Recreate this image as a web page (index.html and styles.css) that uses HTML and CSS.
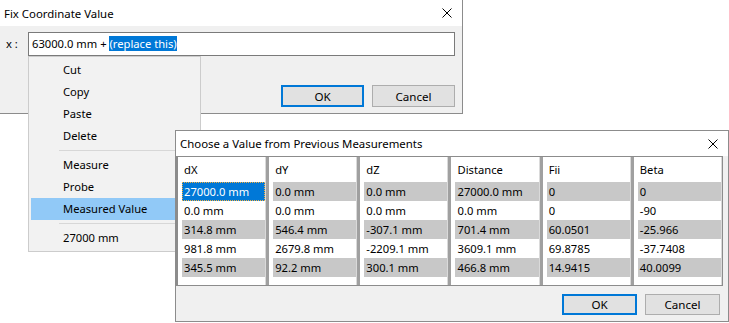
FILE: index.html
```html
<!DOCTYPE html>
<html lang="en">
<head>
    <meta charset="UTF-8">
    <title>Fix Coordinate Value</title>
    <link rel="stylesheet" href="styles.css">
</head>
<body>
    <div class="desktop">
        <div class="window fix-dialog">
            <div class="titlebar">
                <span class="title">Fix Coordinate Value</span>
                <svg class="close" width="10" height="10" viewBox="0 0 10 10"><path d="M0.5 0.5 L9.5 9.5 M9.5 0.5 L0.5 9.5" stroke="#000" stroke-width="1"/></svg>
            </div>
            <div class="dialog-body">
                <div class="field-row">
                    <span class="field-label">x :</span>
                    <div class="textbox">63000.0 mm + <span class="selected-text">(replace this)</span></div>
                </div>
                <div class="buttons">
                    <button class="btn default">OK</button>
                    <button class="btn">Cancel</button>
                </div>
            </div>
        </div>

        <div class="context-menu">
            <div class="menu-item">Cut</div>
            <div class="menu-item">Copy</div>
            <div class="menu-item">Paste</div>
            <div class="menu-item">Delete</div>
            <div class="menu-separator"></div>
            <div class="menu-item">Measure</div>
            <div class="menu-item">Probe</div>
            <div class="menu-item hover">Measured Value</div>
            <div class="menu-separator"></div>
            <div class="menu-item">27000 mm</div>
        </div>

        <div class="window choose-dialog">
            <div class="titlebar">
                <span class="title">Choose a Value from Previous Measurements</span>
                <svg class="close" width="10" height="10" viewBox="0 0 10 10"><path d="M0.5 0.5 L9.5 9.5 M9.5 0.5 L0.5 9.5" stroke="#000" stroke-width="1"/></svg>
            </div>
            <div class="values-table">
                <div class="column">
                    <div class="column-head">dX</div>
                    <div class="cell shaded current">27000.0 mm</div>
                    <div class="cell">0.0 mm</div>
                    <div class="cell shaded">314.8 mm</div>
                    <div class="cell">981.8 mm</div>
                    <div class="cell shaded">345.5 mm</div>
                </div>
                <div class="column">
                    <div class="column-head">dY</div>
                    <div class="cell shaded">0.0 mm</div>
                    <div class="cell">0.0 mm</div>
                    <div class="cell shaded">546.4 mm</div>
                    <div class="cell">2679.8 mm</div>
                    <div class="cell shaded">92.2 mm</div>
                </div>
                <div class="column">
                    <div class="column-head">dZ</div>
                    <div class="cell shaded">0.0 mm</div>
                    <div class="cell">0.0 mm</div>
                    <div class="cell shaded">-307.1 mm</div>
                    <div class="cell">-2209.1 mm</div>
                    <div class="cell shaded">300.1 mm</div>
                </div>
                <div class="column">
                    <div class="column-head">Distance</div>
                    <div class="cell shaded">27000.0 mm</div>
                    <div class="cell">0.0 mm</div>
                    <div class="cell shaded">701.4 mm</div>
                    <div class="cell">3609.1 mm</div>
                    <div class="cell shaded">466.8 mm</div>
                </div>
                <div class="column">
                    <div class="column-head">Fii</div>
                    <div class="cell shaded">0</div>
                    <div class="cell">0</div>
                    <div class="cell shaded">60.0501</div>
                    <div class="cell">69.8785</div>
                    <div class="cell shaded">14.9415</div>
                </div>
                <div class="column">
                    <div class="column-head">Beta</div>
                    <div class="cell shaded">0</div>
                    <div class="cell">-90</div>
                    <div class="cell shaded">-25.966</div>
                    <div class="cell">-37.7408</div>
                    <div class="cell shaded">40.0099</div>
                </div>
            </div>
            <div class="buttons">
                <button class="btn default">OK</button>
                <button class="btn">Cancel</button>
            </div>
        </div>
    </div>
</body>
</html>
```

FILE: styles.css
```css
* {
    box-sizing: border-box;
}
body {
    margin: 0;
    background-color: #fff;
    font-family: "Noto Sans", "Segoe UI", sans-serif;
    font-size: 11.2px;
    color: #000;
}
.desktop {
    position: relative;
    width: 729px;
    height: 323px;
    overflow: hidden;
}
.window {
    position: absolute;
    display: flex;
    flex-direction: column;
    background-color: #f0f0f0;
    border: 1px solid #8c8c8c;
}
.titlebar {
    display: flex;
    align-items: center;
    justify-content: space-between;
    background-color: #fff;
}
.title {
    font-size: 11.4px;
}
.close {
    display: block;
}
.btn {
    font: inherit;
    font-size: 11.6px;
    color: #000;
    background-color: #e1e1e1;
    border: 1px solid #adadad;
    padding: 0;
}
.btn.default {
    border: 2px solid #0078d7;
}
.buttons {
    display: flex;
    justify-content: flex-end;
    gap: 8px;
}

/* first dialog */
.fix-dialog {
    left: -1px;
    top: -1px;
    width: 464px;
    height: 115px;
}
.fix-dialog .titlebar {
    height: 26px;
    padding: 0 10px 0 4px;
}
.dialog-body {
    padding: 6px 7px 0 6px;
}
.field-row {
    display: flex;
    align-items: center;
}
.field-label {
    width: 22px;
    margin-top: -2px;
}
.textbox {
    flex: 1;
    height: 24px;
    line-height: 22px;
    padding-left: 3px;
    background-color: #fff;
    border: 1px solid #7a7a7a;
    white-space: nowrap;
}
.selected-text {
    background-color: #0078d7;
    color: #fff;
}
.fix-dialog .buttons {
    margin-top: 29px;
}
.fix-dialog .btn {
    width: 83px;
    height: 22px;
}

/* context menu */
.context-menu {
    position: absolute;
    left: 28px;
    top: 56px;
    width: 173px;
    padding: 2px;
    background-color: #f2f2f2;
    border: 1px solid #cccccc;
}
.menu-item {
    height: 22px;
    line-height: 22px;
    padding-left: 32px;
}
.menu-item.hover {
    background-color: #91c9f7;
}
.menu-separator {
    height: 7px;
    margin-left: 28px;
    margin-right: 2px;
    border-top: 1px solid #d7d7d7;
    transform: translateY(3px);
}

/* second dialog */
.choose-dialog {
    left: 175px;
    top: 130px;
    width: 554px;
    height: 192px;
}
.choose-dialog .titlebar {
    height: 25px;
    padding: 0 10px 0 4px;
}
.values-table {
    display: grid;
    grid-template-columns: repeat(6, 1fr);
    gap: 3px;
    height: 130px;
    margin-right: 5px;
    background-color: #a0a0a0;
    border: 1px solid #8c8c8c;
    border-left-width: 2px;
}
.column {
    background-color: #fff;
    border-right: 1px solid #dadada;
}
.column-head {
    height: 25px;
    line-height: 25px;
    padding-left: 6px;
}
.cell {
    height: 19px;
    line-height: 19px;
    margin-left: 4px;
    padding-left: 2px;
    white-space: nowrap;
}
.cell.shaded {
    background-color: #c8c8c8;
}
.cell.current {
    background-color: #0078d7;
    color: #fff;
    outline: 1px dotted #f5b040;
    outline-offset: -1px;
}
.choose-dialog .buttons {
    margin-top: 8px;
    padding-right: 8px;
}
.choose-dialog .btn {
    width: 75px;
    height: 21px;
}
```
